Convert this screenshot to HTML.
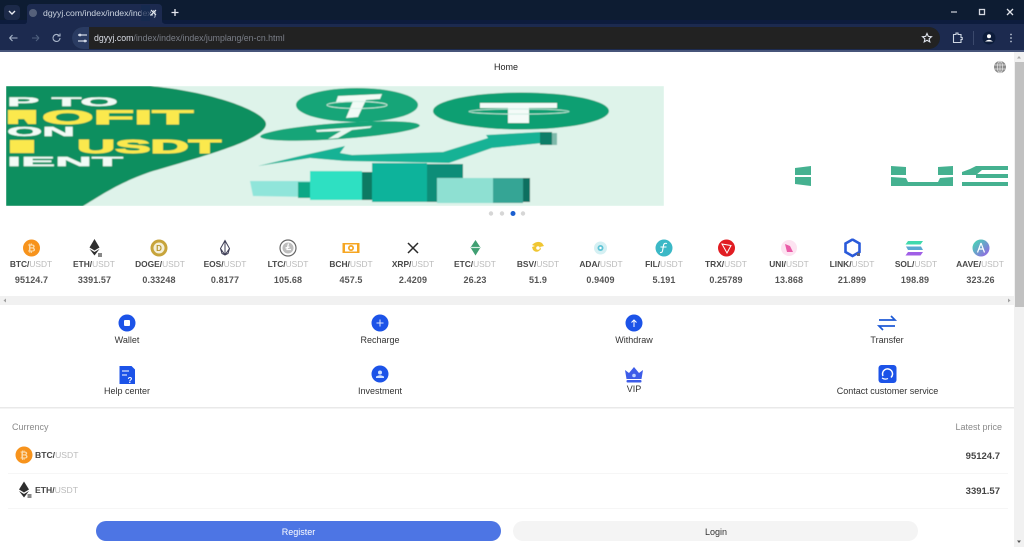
<!DOCTYPE html>
<html lang="en">
<head>
<meta charset="utf-8">
<title>dgyyj.com</title>
<style>
html,body{margin:0;padding:0;width:1024px;height:547px;overflow:hidden;background:#fff}
svg{display:block;position:absolute;left:0;top:0}
text{font-family:"Liberation Sans",sans-serif}
.pair{font-size:8.4px;font-weight:700;fill:#484848;text-anchor:middle}
.pair tspan{font-weight:400;fill:#bbb}
.price{font-size:9px;font-weight:700;fill:#555;text-anchor:middle;letter-spacing:.1px}
.menu{font-size:9px;fill:#333;text-anchor:middle}
</style>
</head>
<body>
<svg width="1024" height="547" viewBox="0 0 1024 547" xmlns="http://www.w3.org/2000/svg">
<defs>
<filter id="soft" x="-2%" y="-2%" width="104%" height="104%"><feGaussianBlur stdDeviation="0.35"/></filter>
<filter id="soft2" x="-2%" y="-2%" width="104%" height="104%"><feGaussianBlur stdDeviation="0.6"/></filter>
<clipPath id="ban"><rect x="6" y="86" width="658" height="120"/></clipPath>
<linearGradient id="sol" x1="0" y1="0" x2="1" y2="1"><stop offset="0" stop-color="#3fe0b0"/><stop offset="1" stop-color="#9a5ce8"/></linearGradient>
</defs>

<!-- browser chrome -->
<g filter="url(#soft)">
<rect x="0" y="0" width="1024" height="24" fill="#0d1a30"/>
<rect x="0" y="20" width="1024" height="4" fill="#0b1b3e"/>
<rect x="4" y="5" width="16" height="15" rx="4" fill="#1d2b4a"/>
<path d="M9 11l3 3 3-3" stroke="#e6e9f0" stroke-width="1.4" fill="none"/>
<path d="M24 24q3 0 3-3V8q0-4 4-4h127q4 0 4 4v13q0 3 5 3z" fill="#1a2c50"/>
<circle cx="33" cy="13" r="4" fill="#55617a"/>
<text x="43" y="16" font-size="8.7" fill="#cdd3df">dgyyj.com/index/index/index/j</text>
<rect x="141" y="5" width="9" height="16" fill="#1a2c50" opacity=".75"/>
<path d="M151 10l5 5m0-5l-5 5" stroke="#e6e9f0" stroke-width="1.2"/>
<path d="M175 9v7m-3.500-3.500h7" stroke="#e6e9f0" stroke-width="1.300"/>
<path d="M951 12h6" stroke="#cfd4de" stroke-width="1.200"/>
<rect x="979.500" y="9.500" width="5" height="5" fill="none" stroke="#d5d9e2" stroke-width="1.300"/>
<path d="M1007 9l6 6m0-6l-6 6" stroke="#dfe3ea" stroke-width="1.300"/>

<rect x="0" y="24" width="1024" height="27" fill="#1a2c50"/>
<rect x="0" y="50" width="1024" height="2" fill="#46547a"/>
<path d="M9.500 38h8m-8 0l3-3m-3 3l3 3" stroke="#a9b4c9" stroke-width="1.100" fill="none"/>
<path d="M39 38h-7m7 0l-3-3m3 3l-3 3" stroke="#50607f" stroke-width="1.100" fill="none"/>
<path d="M60 38a3.500 3.500 0 1 1-1-2.500M60 33.500v2.500h-2.500" stroke="#a9b4c9" stroke-width="1.100" fill="none"/>
<rect x="72" y="27" width="868" height="22" rx="11" fill="#202124"/>
<path d="M83 27a11 11 0 0 0 0 22h6V27z" fill="#2a3b62"/>
<path d="M78 35h9M78 41h9" stroke="#cfd6e4" stroke-width="1.300"/>
<circle cx="80" cy="35" r="1.400" fill="#cfd6e4"/><circle cx="85" cy="41" r="1.400" fill="#cfd6e4"/>
<text x="94" y="41" font-size="8.750" fill="#dcdfe6">dgyyj.com<tspan fill="#7b7f87">/index/index/index/jumplang/en-cn.html</tspan></text>
<path d="M927 33.500l1.300 2.900 3.200.3-2.400 2.100.7 3.100-2.800-1.600-2.800 1.600.7-3.100-2.400-2.100 3.200-.3z" fill="none" stroke="#dfe3ea" stroke-width="1.100"/>
<path d="M953.500 34.500h2.500v-1.500h2v1.500h3v3h1.200v2h-1.200v3h-7.500z" fill="none" stroke="#cfd5e2" stroke-width="1.100"/>
<rect x="973" y="31" width="1" height="14" fill="#3a4a6c"/>
<circle cx="989" cy="38" r="6.500" fill="#0f1d3a"/>
<circle cx="989" cy="36.200" r="2" fill="#fff"/>
<path d="M985 41.500q4-3.500 8 0z" fill="#fff"/>
<circle cx="1011" cy="34.500" r=".9" fill="#b8c0d0"/><circle cx="1011" cy="38" r=".9" fill="#b8c0d0"/><circle cx="1011" cy="41.500" r=".9" fill="#b8c0d0"/>
</g>

<!-- vertical scrollbar -->
<rect x="1014" y="52" width="10" height="495" fill="#f1f1f1"/>
<rect x="1015" y="62" width="9" height="245" fill="#c1c1c1"/>
<path d="M1019 56l-2 2.500h4z" fill="#a8a8a8"/>
<path d="M1019 543l-2-2.500h4z" fill="#555"/>

<!-- header -->
<g filter="url(#soft)">
<text x="506" y="70" font-size="9" fill="#222" text-anchor="middle">Home</text>
<circle cx="1000" cy="67" r="6" fill="#8a8a8a"/>
<g stroke="#e8e8e8" stroke-width=".7" fill="none"><ellipse cx="1000" cy="67" rx="2.700" ry="6"/><path d="M994.500 65h11M994.500 69h11M1000 61v12"/></g>
</g>

<!-- banner -->
<g clip-path="url(#ban)" filter="url(#soft2)">
<rect x="6" y="86" width="658" height="120" fill="#def3ea"/>
<path d="M6 86H150C215 92 266 112 266 124C266 140 200 157 150 172C118 183 100 196 83 206H6z" fill="#0d8f5e"/>
<g font-weight="700" font-family="Liberation Sans">
<text x="7" y="106" font-size="11.500" fill="#f2fbf6" stroke="#f2fbf6" stroke-width=".4" textLength="111" lengthAdjust="spacingAndGlyphs">P TO</text>
<path d="M8 110h28v14h-8l-4-5h-6v5H8z" fill="#fbe94d"/>
<text x="42" y="124" font-size="19.500" fill="#fbe94d" stroke="#fbe94d" stroke-width=".9" textLength="151" lengthAdjust="spacingAndGlyphs">OFIT</text>
<text x="7" y="136" font-size="12.500" fill="#f2fbf6" stroke="#f2fbf6" stroke-width=".4" textLength="68" lengthAdjust="spacingAndGlyphs">ON</text>
<rect x="10" y="140" width="24" height="13" fill="#fbe94d"/>
<text x="77" y="153" font-size="18" fill="#fbe94d" stroke="#fbe94d" stroke-width=".9" textLength="144" lengthAdjust="spacingAndGlyphs">USDT</text>
<text x="7" y="166" font-size="12.500" fill="#f2fbf6" stroke="#f2fbf6" stroke-width=".4" textLength="116" lengthAdjust="spacingAndGlyphs">IENT</text>
</g>
<!-- coin 1 -->
<ellipse cx="357" cy="105" rx="61" ry="17" fill="#12a578"/>
<path d="M338 96l44-2-2 5-14 1-8 17-12 1 7-17-17 1z" fill="#f2fbf6"/>
<ellipse cx="357" cy="105" rx="30" ry="3.500" fill="none" stroke="#d5f2e6" stroke-width=".9"/>
<!-- coin 2 -->
<ellipse cx="340" cy="131" rx="80" ry="8" transform="rotate(-4 340 131)" fill="#12a578"/>
<path d="M316 130l56-4-2 2-18 2-14 8-10 1 13-8-24 1z" fill="#e6f7ef"/>
<!-- coin 3 -->
<ellipse cx="521" cy="111" rx="88" ry="18.500" fill="#0f9f72"/>
<rect x="480" y="103" width="77" height="5" fill="#f4fbf8"/>
<rect x="508" y="108" width="21" height="15" fill="#f4fbf8"/>
<ellipse cx="519" cy="111.500" rx="50" ry="2.600" fill="none" stroke="#c7ecdf" stroke-width=".9"/>
<!-- arrow -->
<path d="M258 166L300 156 345 146 340 153 352 155 443 152 488 138 486 135 540 132 543 143 492 148 449 163 345 161 310 158z" fill="#12b295"/>
<rect x="540" y="132" width="12" height="13" fill="#0c7d68"/>
<rect x="552" y="133" width="5" height="12" fill="#7db9aa"/>
<!-- bars -->
<path d="M250 181H310V197L253 196z" fill="#90e5da"/>
<rect x="298" y="182" width="14" height="16" fill="#0fa886"/>
<rect x="310" y="171" width="52" height="29" fill="#2fe0c2"/>
<rect x="362" y="172" width="11" height="28" fill="#0b7a63"/>
<rect x="372" y="163" width="55" height="39" fill="#0fb39b"/>
<rect x="427" y="164" width="36" height="38" fill="#0e8d78"/>
<rect x="437" y="178" width="56" height="25" fill="#8ee0d2"/>
<rect x="493" y="178" width="30" height="25" fill="#35a595"/>
<rect x="523" y="178" width="7" height="24" fill="#0c6f60"/>
</g>
<g fill="#45b190" filter="url(#soft)">
<path d="M795 168l16-2v9h-16zM795 177h16v9l-16-2z"/>
<path d="M891 166l15 1v8h-15zM891 177l15 1 2 4h30l2-4 13-1v9H891z"/>
<path d="M938 167l15-1v9h-15z"/>
<path d="M962 172l8-3 6-3h32v4h-26l-6 5h-14zM976 174h32v4h-32zM962 182h46v4h-46z"/>
</g>
<g filter="url(#soft)">
<circle cx="491" cy="213.500" r="2.200" fill="#d6d6d6"/>
<circle cx="502" cy="213.500" r="2.200" fill="#d6d6d6"/>
<circle cx="513" cy="213.500" r="2.500" fill="#1a5fd0"/>
<circle cx="523" cy="213.500" r="2.200" fill="#d6d6d6"/>
</g>

<!-- ticker icons -->
<g filter="url(#soft)">
<circle cx="31.500" cy="248" r="8.500" fill="#f7931a"/><text x="31.500" y="251.500" font-size="10" font-weight="700" fill="#fbdcae" text-anchor="middle">₿</text>
<path d="M94.500 239l5 8.500-5 3-5-3zM89.500 249l5 3 5-3-5 6.500z" fill="#2f2f2f"/><rect x="98" y="253" width="4" height="4" fill="#888"/>
<circle cx="159" cy="248" r="8.500" fill="#c7a43b"/><circle cx="159" cy="248" r="5.500" fill="#f4efd8"/><text x="159" y="251" font-size="8" font-weight="700" fill="#b8962e" text-anchor="middle">D</text>
<path d="M225 240.500l4.500 8-1.500 5-3 1.500-3-1.500-1.500-5zM225 241v14M220.500 248.500l4.500 6.500 4.500-6.500" fill="none" stroke="#3d3d55" stroke-width="1"/>
<circle cx="288" cy="248" r="8" fill="#fff" stroke="#666" stroke-width="1.200"/><circle cx="288" cy="248" r="5.500" fill="#bdbdbd"/><path d="M288.500 243.500l-1.500 6h4M285.500 248l4-1" stroke="#fff" stroke-width="1.200" fill="none"/>
<rect x="342.500" y="243" width="17" height="10" fill="#f6a623"/><rect x="345" y="244.500" width="12" height="7" fill="#fff"/><circle cx="351" cy="248" r="3" fill="#f6a623"/><circle cx="351" cy="248" r="1.300" fill="#fff"/>
<path d="M408 243l10 10M418 243l-10 10" stroke="#2c2c2c" stroke-width="1.500"/>
<path d="M475.500 240l5 7.500-5 8-5-8z" fill="#3f9f72"/><path d="M471 247.500h9" stroke="#d6efe3" stroke-width="1.200"/>
<path d="M532 245q5-5 10-2l2 3-4 1 1 2q-4 5-8 1l-1-3 3-1z" fill="#f0c632"/><circle cx="538" cy="248" r="1.800" fill="#fff"/>
<circle cx="600.500" cy="248" r="6.500" fill="#d5f0f3"/><circle cx="600.500" cy="248" r="3" fill="#5fc4d6"/><circle cx="600.500" cy="248" r="1.200" fill="#fff"/>
<circle cx="664" cy="248" r="8.500" fill="#3ab8c6"/><path d="M667 243.500q-3-1-3.500 2l-1 5.500q-.5 2-2.500 1.500M660.500 247h6" stroke="#fff" stroke-width="1.100" fill="none"/>
<circle cx="726.500" cy="248" r="8.500" fill="#e11b22"/><path d="M722 244l9 1.500-4 7.500z" fill="none" stroke="#fff" stroke-width="1"/>
<circle cx="789" cy="248" r="8" fill="#fde3f1"/><path d="M785 244l5 2 3 6-6 0z" fill="#ea5ba7"/>
<path d="M852.500 239.500l7 4v8.500l-7 4-7-4v-8.500z" fill="#fff" stroke="#2a5ada" stroke-width="2.600"/><rect x="857" y="253" width="3" height="3" fill="#667"/>
<path d="M908 241h15l-2.500 3.500h-15z" fill="#3fd9ad"/><path d="M906 246.500h15l2 3.500h-15z" fill="#5aa8d0"/><path d="M908 252h15l-2.500 3.500h-15z" fill="#a05ee6"/>
<circle cx="981" cy="248" r="8.500" fill="url(#sol)"/><path d="M981 243l-3.500 9.500M981 243l3.500 9.500M978.500 249h5" stroke="#fff" stroke-width="1.200" fill="none"/>
</g>

<!-- ticker text -->
<g filter="url(#soft)">
<text class="pair" x="31" y="267">BTC/<tspan>USDT</tspan></text>
<text class="pair" x="94" y="267">ETH/<tspan>USDT</tspan></text>
<text class="pair" x="160" y="267">DOGE/<tspan>USDT</tspan></text>
<text class="pair" x="225" y="267">EOS/<tspan>USDT</tspan></text>
<text class="pair" x="288" y="267">LTC/<tspan>USDT</tspan></text>
<text class="pair" x="351" y="267">BCH/<tspan>USDT</tspan></text>
<text class="pair" x="413" y="267">XRP/<tspan>USDT</tspan></text>
<text class="pair" x="475" y="267">ETC/<tspan>USDT</tspan></text>
<text class="pair" x="538" y="267">BSV/<tspan>USDT</tspan></text>
<text class="pair" x="601" y="267">ADA/<tspan>USDT</tspan></text>
<text class="pair" x="664" y="267">FIL/<tspan>USDT</tspan></text>
<text class="pair" x="726" y="267">TRX/<tspan>USDT</tspan></text>
<text class="pair" x="789" y="267">UNI/<tspan>USDT</tspan></text>
<text class="pair" x="852" y="267">LINK/<tspan>USDT</tspan></text>
<text class="pair" x="916" y="267">SOL/<tspan>USDT</tspan></text>
<text class="pair" x="980" y="267">AAVE/<tspan>USDT</tspan></text>
<text class="price" x="31.500" y="283">95124.7</text>
<text class="price" x="94.500" y="283">3391.57</text>
<text class="price" x="159" y="283">0.33248</text>
<text class="price" x="225" y="283">0.8177</text>
<text class="price" x="288" y="283">105.68</text>
<text class="price" x="351" y="283">457.5</text>
<text class="price" x="413" y="283">2.4209</text>
<text class="price" x="475" y="283">26.23</text>
<text class="price" x="538" y="283">51.9</text>
<text class="price" x="600.500" y="283">0.9409</text>
<text class="price" x="664" y="283">5.191</text>
<text class="price" x="726" y="283">0.25789</text>
<text class="price" x="789" y="283">13.868</text>
<text class="price" x="852" y="283">21.899</text>
<text class="price" x="915" y="283">198.89</text>
<text class="price" x="980.500" y="283">323.26</text>
</g>

<!-- horizontal scrollbar -->
<rect x="0" y="296" width="1014" height="9" fill="#f1f1f1"/>
<path d="M3.500 300.500l2.500-2v4z" fill="#a0a0a0"/>
<path d="M1010.500 300.500l-2.500-2v4z" fill="#a0a0a0"/>

<!-- menu -->
<g filter="url(#soft)">
<circle cx="127" cy="323" r="8.500" fill="#1a52e8"/><rect x="124" y="320" width="6" height="6" rx="1" fill="#fff"/>
<circle cx="380" cy="323" r="8.500" fill="#1a52e8"/><path d="M380 319.500v7M376.500 323h7" stroke="#dbe5ff" stroke-width="1"/>
<circle cx="634" cy="323" r="8.500" fill="#1a52e8"/><path d="M634 327v-7M631.500 322.500l2.500-2.500 2.500 2.500" stroke="#fff" stroke-width="1" fill="none"/>
<path d="M879 320h16l-4-4M895 326h-16l4 4" stroke="#1f5ad6" stroke-width="1.700" fill="none"/>
<path d="M119.500 366h12l3.500 3.500v14.500h-15.500z" fill="#1a52e8"/>
<path d="M122 371h7M122 375h5" stroke="#fff" stroke-width="1"/>
<text x="130" y="383" font-size="8" font-weight="700" fill="#fff" text-anchor="middle">?</text>
<circle cx="380" cy="374" r="8.500" fill="#1a52e8"/><circle cx="380" cy="372.500" r="2" fill="#cfe0ff"/><path d="M376 378h8v-1.500q-4-2.500-8 0z" fill="#cfe0ff"/>
<path d="M625 370l4 3 5-6 5 6 4-3-1.500 9h-15z" fill="#3d5ce8"/><rect x="626.500" y="380" width="15" height="2.500" rx="1" fill="#3d5ce8"/><circle cx="634" cy="375.500" r="1.800" fill="#bcd0ff"/>
<rect x="878.500" y="365" width="18" height="18" rx="3" fill="#1a52e8"/>
<path d="M883 376a5 5 0 1 1 8 1.500" fill="none" stroke="#fff" stroke-width="1.500"/><path d="M882 378q3 2 6 .5" fill="none" stroke="#fff" stroke-width="1.200"/>
<text class="menu" x="127" y="343">Wallet</text>
<text class="menu" x="380" y="343">Recharge</text>
<text class="menu" x="634" y="343">Withdraw</text>
<text class="menu" x="887" y="343">Transfer</text>
<text class="menu" x="127" y="394">Help center</text>
<text class="menu" x="380" y="394">Investment</text>
<text class="menu" x="634" y="392">VIP</text>
<text class="menu" x="887.500" y="394">Contact customer service</text>
</g>

<rect x="0" y="407" width="1014" height="1.500" fill="#e9e9e9"/>

<!-- list -->
<g filter="url(#soft)">
<text x="12" y="430" font-size="9" fill="#8a8a8a">Currency</text>
<text x="1002" y="430" font-size="9" fill="#8a8a8a" text-anchor="end">Latest price</text>
<circle cx="24" cy="455" r="8.500" fill="#f7931a"/><text x="24" y="458.500" font-size="10" font-weight="700" fill="#fbdcae" text-anchor="middle">₿</text>
<text x="35" y="458" font-size="8.600" font-weight="700" fill="#444">BTC/<tspan font-weight="400" fill="#bbb">USDT</tspan></text>
<text x="1000" y="459" font-size="9.500" font-weight="700" fill="#444" text-anchor="end">95124.7</text>
<rect x="8" y="473" width="1000" height="1" fill="#f6f6f6"/>
<path d="M24 481.500l5 8-5 3-5-3zM19 491l5 3 5-3-5 6.500z" fill="#2f2f2f"/><rect x="27.500" y="494" width="4" height="4" fill="#888"/>
<text x="35" y="493" font-size="8.600" font-weight="700" fill="#444">ETH/<tspan font-weight="400" fill="#bbb">USDT</tspan></text>
<text x="1000" y="494" font-size="9.500" font-weight="700" fill="#444" text-anchor="end">3391.57</text>
<rect x="8" y="508" width="1000" height="1" fill="#f6f6f6"/>
<rect x="96" y="521" width="405" height="20" rx="10" fill="#4d74e4"/>
<rect x="513" y="521" width="405" height="20" rx="10" fill="#f4f4f4"/>
<text x="298.500" y="535" font-size="9" fill="#fff" text-anchor="middle">Register</text>
<text x="716" y="535" font-size="9" fill="#333" text-anchor="middle">Login</text>
</g>
</svg>
</body>
</html>
